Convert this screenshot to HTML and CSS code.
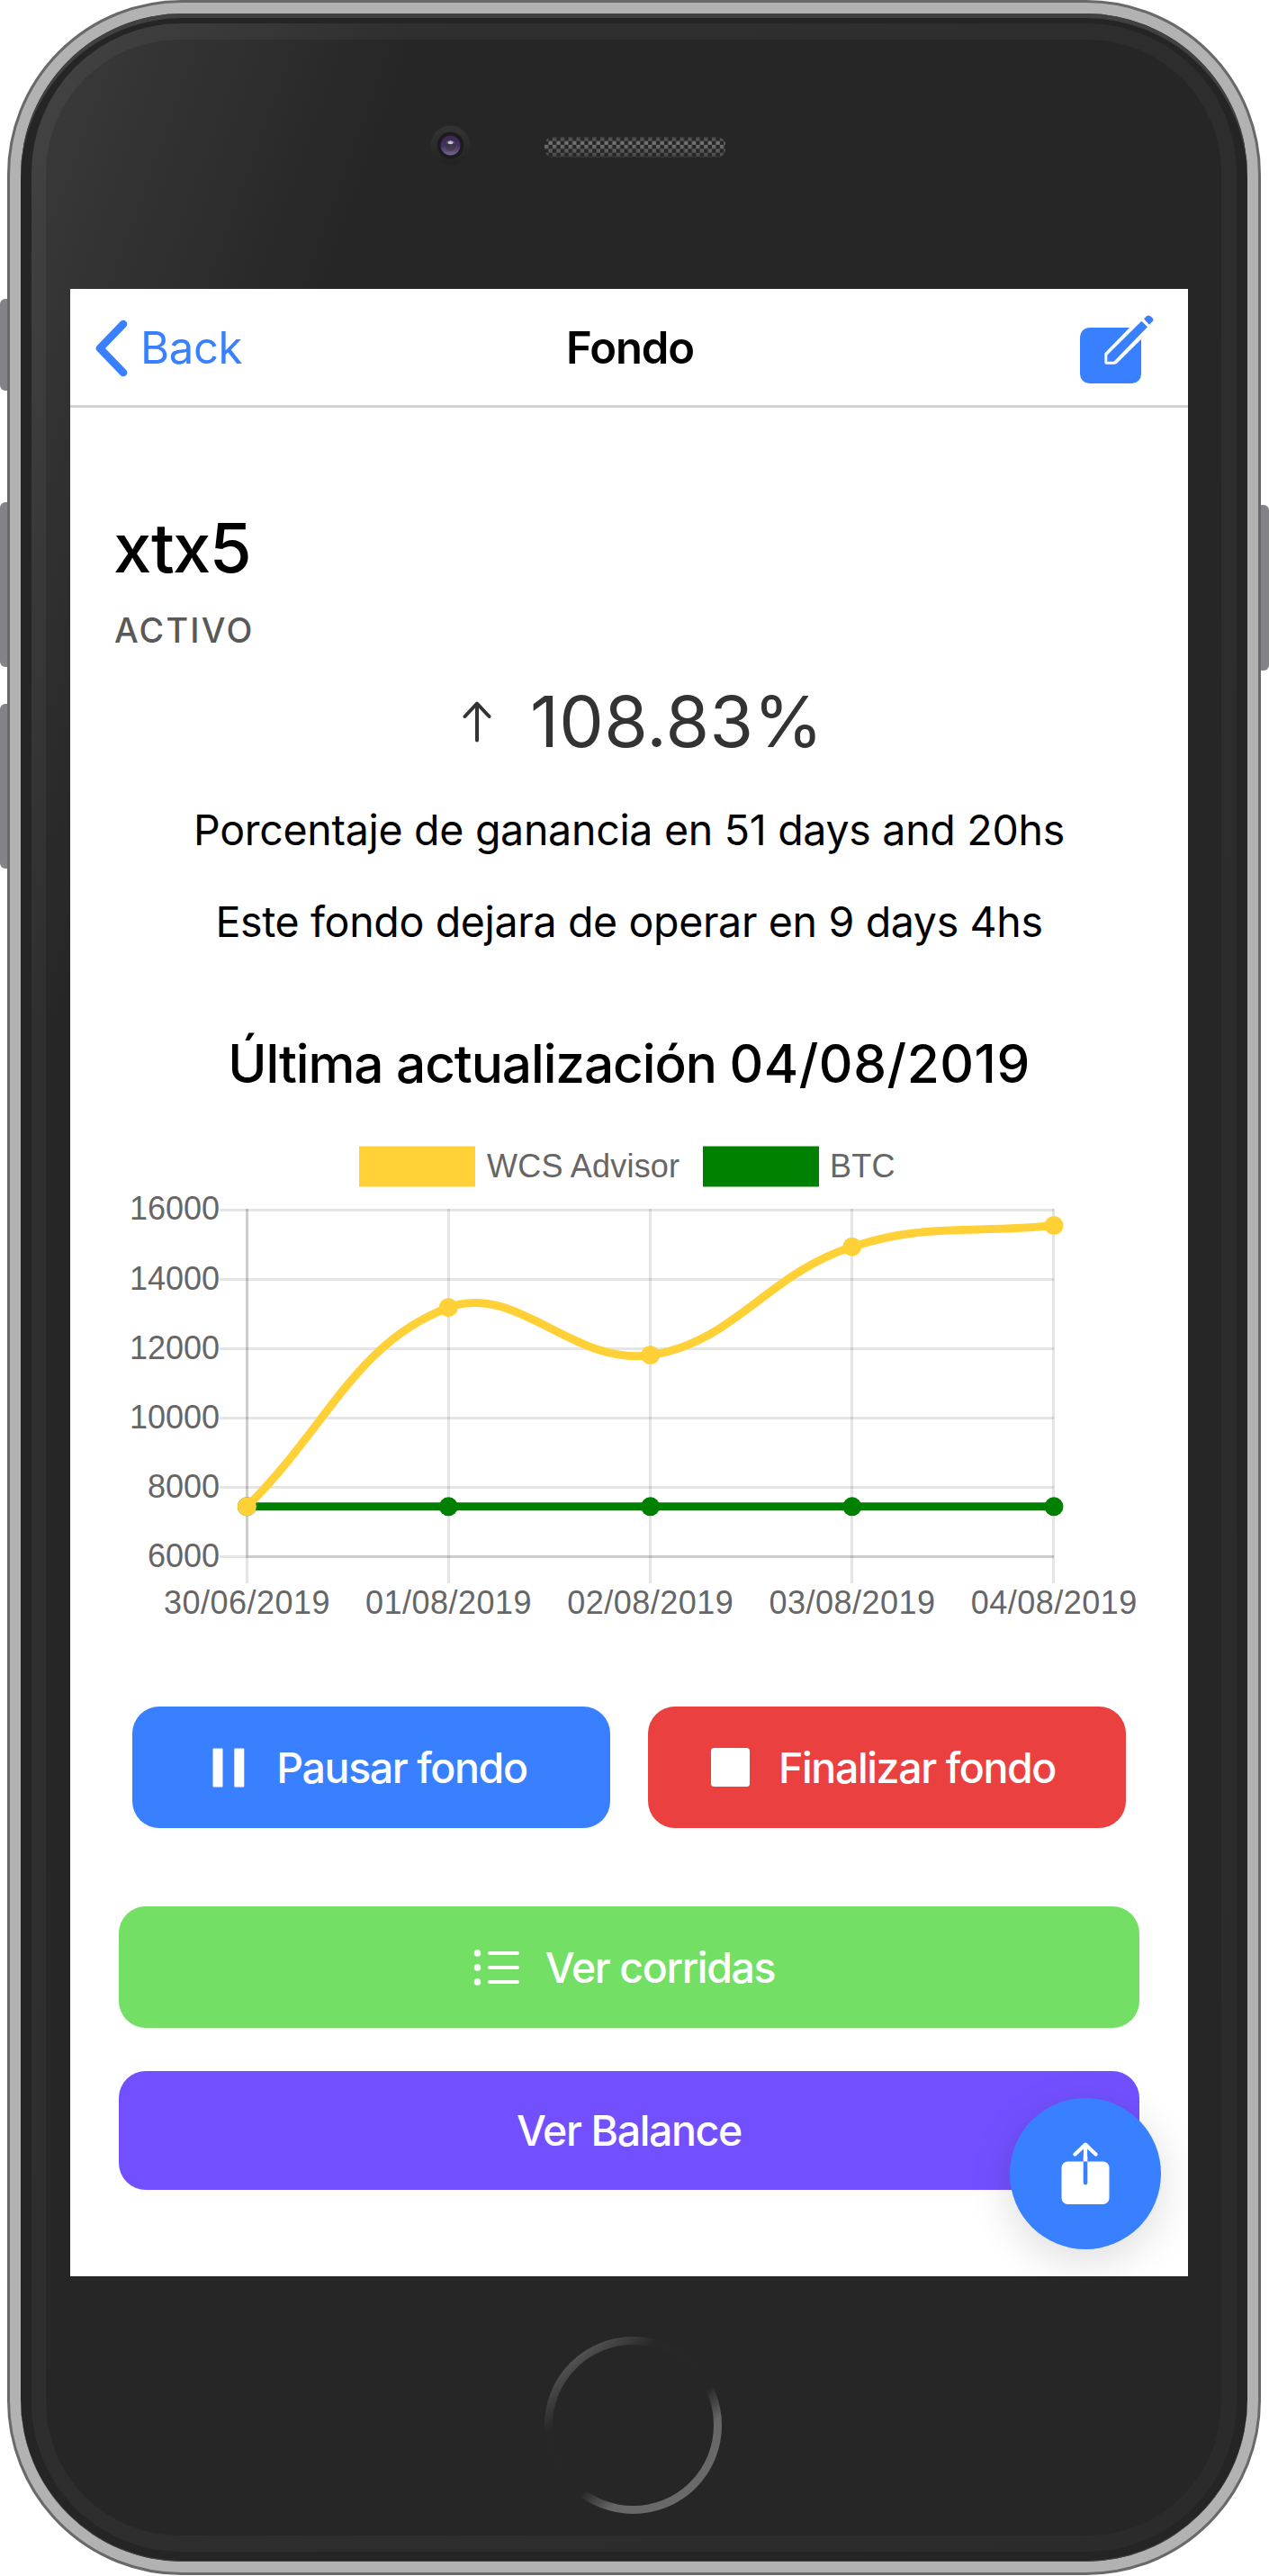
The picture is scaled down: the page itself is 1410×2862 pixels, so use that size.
FILE: index.html
```html
<!DOCTYPE html>
<html lang="es">
<head>
<meta charset="utf-8">
<title>Fondo</title>
<link rel="stylesheet" href="styles.css">
</head>
<body>
<div class="phone">
  <span class="key key-mute"></span>
  <span class="key key-up"></span>
  <span class="key key-down"></span>
  <span class="key key-power"></span>
  <div class="frame">
    <div class="bezel">
      <div class="rim">
        <div class="face">
          <div class="sensors">
            <svg class="camera" viewBox="0 0 46 46">
              <defs>
                <linearGradient id="cam-rim" x1="0" y1="0" x2="0" y2="1"><stop offset="0" stop-color="#343434"/><stop offset="1" stop-color="#222"/></linearGradient>
                <linearGradient id="cam-lens" x1="0" y1="0" x2="0" y2="1"><stop offset="0" stop-color="#3a2650"/><stop offset=".5" stop-color="#43305f"/><stop offset="1" stop-color="#75648c"/></linearGradient>
                <linearGradient id="cam-core" x1="0" y1="0" x2="0" y2="1"><stop offset="0" stop-color="#8d8795"/><stop offset=".35" stop-color="#3a3345"/><stop offset="1" stop-color="#4a4058"/></linearGradient>
              </defs>
              <circle cx="23" cy="23" r="22.5" fill="url(#cam-rim)"/>
              <circle cx="23" cy="23" r="15" fill="#1b1b1f"/>
              <circle cx="23" cy="23" r="11.2" fill="url(#cam-lens)"/>
              <circle cx="23" cy="23.5" r="6" fill="url(#cam-core)"/>
              <ellipse cx="23" cy="20" rx="3" ry="1.6" fill="#c9c6cc"/>
            </svg>
            <svg class="speaker" viewBox="0 0 202 23">
              <defs>
                <pattern id="mesh" width="8.9" height="8.9" patternUnits="userSpaceOnUse"><rect width="4.45" height="4.45" fill="#fff"/><rect x="4.45" y="4.45" width="4.45" height="4.45" fill="#fff"/></pattern>
                <linearGradient id="mesh-tone" x1="0" y1="0" x2="0" y2="1"><stop offset="0" stop-color="#3c3c3c"/><stop offset=".3" stop-color="#757575"/><stop offset="1" stop-color="#444"/></linearGradient>
                <mask id="mesh-mask"><rect width="202" height="23" rx="9" fill="url(#mesh)"/></mask>
              </defs>
              <rect width="202" height="23" fill="url(#mesh-tone)" mask="url(#mesh-mask)"/>
            </svg>
          </div>

          <main class="screen">
            <header class="toolbar">
              <a class="back">
                <svg class="chevron" viewBox="0 0 36 64"><path d="M31 5 5 32l26 27" fill="none" stroke="currentColor" stroke-width="8.6" stroke-linecap="round" stroke-linejoin="round"/></svg>
                <span>Back</span>
              </a>
              <h1 class="title">Fondo</h1>
              <svg class="edit" viewBox="0 0 84 78">
                <rect x="1" y="15" width="68" height="62" rx="10.5" fill="#3880ff"/>
                <path d="M57 14 28.300 43.500V53.500q0 2.200 2.200 2.200H39.500q1.600 0 2.700-1.100L72 25V14z" fill="#fff"/>
                <path d="M69.300 7.700 76 14.300 38.500 52.700H31.300V45.500z" fill="#3880ff"/>
                <path d="M72 5.300 74.600 2.700q2.600-2.600 6 .6t.8 5L77.900 11.700z" fill="#3880ff"/>
              </svg>
            </header>

            <section class="summary">
              <h2 class="name">xtx5</h2>
              <p class="status">ACTIVO</p>
              <div class="gain">
                <svg class="arrow" viewBox="0 0 32 46"><path d="M16 43.500V3M2.500 17 16 2.700 29.500 17" fill="none" stroke="currentColor" stroke-width="4" stroke-linecap="round" stroke-linejoin="round"/></svg>
                <span>108.83%</span>
              </div>
              <p class="line line-first">Porcentaje de ganancia en 51 days and 20hs</p>
              <p class="line line-second">Este fondo dejara de operar en 9 days 4hs</p>
            </section>

            <h2 class="updated">Última actualización <span class="date">04/08/2019</span></h2>

            <svg class="chart" viewBox="78 1260 1242 560">
              <rect x="399" y="1273.500" width="129" height="45" fill="#ffd137"/>
              <rect x="781" y="1273.500" width="129" height="45" fill="#008000"/>
              <g class="chart-text legend">
                <text x="541" y="1307.500">WCS Advisor</text>
                <text x="922" y="1307.500">BTC</text>
              </g>
              <g stroke="#000" stroke-opacity=".1" stroke-width="3">
                <path d="M244 1344.500H1171M244 1421.500H1171M244 1498.500H1171M244 1575.500H1171M244 1652.500H1171M244 1729.500H1171"/>
                <path d="M274.500 1343V1759M498.500 1343V1759M722.500 1343V1759M946.500 1343V1759M1170.500 1343V1759"/>
                <path d="M274.500 1343V1729.500M273 1729.500H1171"/>
              </g>
              <path d="M274.400 1673.800H1171" stroke="#008000" stroke-width="9"/>
              <g fill="#008000">
                <circle cx="274.400" cy="1673.800" r="10.500"/><circle cx="498.300" cy="1673.800" r="10.500"/><circle cx="722.600" cy="1673.800" r="10.500"/><circle cx="946.800" cy="1673.800" r="10.500"/><circle cx="1171" cy="1673.800" r="10.500"/>
              </g>
              <path d="M274.400 1673.800C364 1585.400 394.800 1491.500 498.300 1452.700C574.100 1424.300 637.300 1518.400 722.600 1505.600C816.700 1491.400 851.700 1415.700 946.800 1385.200C1031.100 1358.100 1081.300 1371 1171 1361.600" fill="none" stroke="#ffd137" stroke-width="9"/>
              <g fill="#ffd137">
                <circle cx="274.400" cy="1673.800" r="10.500"/><circle cx="498.300" cy="1452.700" r="10.500"/><circle cx="722.600" cy="1505.600" r="10.500"/><circle cx="946.800" cy="1385.200" r="10.500"/><circle cx="1171" cy="1361.600" r="10.500"/>
              </g>
              <g class="chart-text" text-anchor="end">
                <text x="244" y="1355">16000</text>
                <text x="244" y="1432.500">14000</text>
                <text x="244" y="1509.500">12000</text>
                <text x="244" y="1586.500">10000</text>
                <text x="244" y="1663.500">8000</text>
                <text x="244" y="1740.500">6000</text>
              </g>
              <g class="chart-text days" text-anchor="middle">
                <text x="274.500" y="1793">30/06/2019</text>
                <text x="498.500" y="1793">01/08/2019</text>
                <text x="722.800" y="1793">02/08/2019</text>
                <text x="947" y="1793">03/08/2019</text>
                <text x="1171.300" y="1793">04/08/2019</text>
              </g>
            </svg>

            <div class="actions">
              <button class="btn btn-pause">
                <svg class="ico-pause" viewBox="0 0 36 44"><rect x=".5" y=".5" width="11" height="43" rx="1" fill="#fff"/><rect x="24.300" y=".5" width="11" height="43" rx="1" fill="#fff"/></svg>
                <span>Pausar fondo</span>
              </button>
              <button class="btn btn-stop">
                <svg class="ico-stop" viewBox="0 0 43 43"><rect width="43" height="43" rx="3.500" fill="#fff"/></svg>
                <span>Finalizar fondo</span>
              </button>
            </div>

            <div class="links">
              <button class="btn btn-runs">
                <svg class="ico-list" viewBox="0 0 52 42">
                  <g fill="#fff"><circle cx="4.500" cy="5" r="3.800"/><circle cx="4.500" cy="21" r="3.800"/><circle cx="4.500" cy="37" r="3.800"/></g>
                  <path d="M18 5h31M18 21h31M18 37h31" stroke="#fff" stroke-width="4" stroke-linecap="round"/>
                </svg>
                <span>Ver corridas</span>
              </button>
              <button class="btn btn-balance"><span>Ver Balance</span></button>
            </div>

            <button class="fab">
              <svg class="ico-share" viewBox="0 0 54 70">
                <rect x=".5" y="21.500" width="53" height="47.500" rx="7" fill="#fff"/>
                <path d="M27 21.500V45" stroke="#3880ff" stroke-width="4.600" stroke-linecap="round"/>
                <path d="M24.700 16h4.600v5.500h-4.600z" fill="#fff"/>
                <path d="M27 18V3M15.500 13.500 27 2.600l11.500 10.900" fill="none" stroke="#fff" stroke-width="4.200" stroke-linecap="round" stroke-linejoin="round"/>
              </svg>
            </button>
          </main>

          <div class="chin">
            <svg class="home" viewBox="0 0 197 197">
              <defs>
                <linearGradient id="ring" gradientUnits="userSpaceOnUse" x1="35.500" y1="22.500" x2="161.500" y2="174.500">
                  <stop offset="0" stop-color="#525252"/><stop offset=".22" stop-color="#272727"/><stop offset=".61" stop-color="#262626"/><stop offset=".78" stop-color="#666"/><stop offset="1" stop-color="#6a6a6a"/>
                </linearGradient>
              </defs>
              <circle cx="98.500" cy="98.500" r="94" fill="none" stroke="url(#ring)" stroke-width="9"/>
            </svg>
          </div>
        </div>
      </div>
    </div>
  </div>
</div>
</body>
</html>
```
FILE: styles.css
```css
* { box-sizing: border-box; }

body {
  margin: 0;
  background: #fff;
  font-family: Inter, "Liberation Sans", sans-serif;
  color: #000;
}

h1, h2, p { margin: 0; }
svg { display: block; flex: none; }

/* device */
.phone {
  position: relative;
  width: 1410px;
  height: 2862px;
  padding: 0 9px 0 8px;
  overflow: hidden;
}

.key {
  position: absolute;
  width: 14px;
  background: #838287;
  border-radius: 6px;
}
.key-mute { left: 0; top: 332px; height: 102px; }
.key-up { left: 0; top: 558px; height: 183px; }
.key-down { left: 0; top: 782px; height: 183px; }
.key-power { right: 0; top: 561px; height: 184px; }

.frame {
  position: relative;
  height: 2861px;
  padding: 12px;
  border: 3px solid #686968;
  border-radius: 194px;
  background: #b2b2b2;
}

.bezel {
  height: 100%;
  padding: 11px 12px;
  border-radius: 180px;
  background: #252525;
  box-shadow: inset 0 5px 0 #404240, inset 0 -1px 0 #444;
}

.rim {
  height: 100%;
  padding: 18px 17px 18px 16px;
  border-radius: 166px;
  background: linear-gradient(110deg, #444 0, #2f2f2f 385px, #2b2b2b 100%);
}

.face {
  display: flex;
  flex-direction: column;
  height: 100%;
  padding: 0 37px 0 27px;
  border-radius: 148px;
  background: linear-gradient(110deg, #3a3a3a 0, #262626 385px);
}

.sensors {
  display: flex;
  align-items: center;
  gap: 82px;
  height: 277px;
  padding: 95px 0 137px 400px;
}
.camera { width: 45px; height: 45px; }
.speaker { width: 201px; height: 23px; margin-top: 4px; }

.chin { flex: 1; padding: 67px 0 0 527px; }
.home { width: 197px; height: 197px; }

/* app */
.screen {
  position: relative;
  display: flex;
  flex-direction: column;
  flex: none;
  height: 2208px;
  overflow: hidden;
  background: #fff;
}

.toolbar {
  display: grid;
  grid-template-columns: 1fr auto 1fr;
  align-items: center;
  flex: none;
  height: 132px;
  padding: 0 37px 0 28px;
  border-bottom: 3px solid #d2d2d2;
  font-size: 49px;
  line-height: 60px;
}
.back {
  display: flex;
  align-items: center;
  gap: 14px;
  padding-top: 3px;
  color: #3880ff;
  letter-spacing: -.35px;
}
.chevron { width: 36px; height: 64px; }
.title {
  padding: 3px 0 0 11px;
  font-size: 49px;
  font-weight: 600;
  letter-spacing: -1.100px;
}
.edit { width: 84px; height: 78px; justify-self: end; margin-top: 5px; }

.summary { flex: none; padding: 110px 0 0 48px; }
.name {
  font-size: 76px;
  font-weight: 500;
  line-height: 90px;
  letter-spacing: -1.750px;
}
.status {
  margin-top: 24px;
  padding-left: 1px;
  font-size: 37.700px;
  font-weight: 450;
  line-height: 46px;
  letter-spacing: 2.250px;
  color: #595959;
}
.gain {
  display: flex;
  align-items: center;
  gap: 43px;
  margin-top: 31px;
  padding-left: 388px;
  font-size: 78.600px;
  line-height: 96px;
  letter-spacing: .3px;
  color: #333;
}
.arrow { width: 32px; height: 46px; }
.line {
  margin-left: -48px;
  text-align: center;
  font-size: 46.500px;
  line-height: 56px;
  white-space: nowrap;
}
.line-first { margin-top: 44px; letter-spacing: -.29px; }
.line-second { margin-top: 46px; letter-spacing: -.345px; }

.updated {
  margin-top: 95px;
  text-align: center;
  font-size: 58.500px;
  font-weight: 500;
  line-height: 70px;
  letter-spacing: -1.070px;
  white-space: nowrap;
}
.date { letter-spacing: .55px; }

.chart { width: 1242px; height: 560px; margin-top: 43px; }
.chart-text {
  font-family: "Liberation Sans", Arial, sans-serif;
  font-size: 36px;
  fill: #666;
}
.legend { letter-spacing: .2px; }
.days { letter-spacing: .5px; }

.btn {
  display: flex;
  align-items: center;
  justify-content: center;
  height: 135px;
  border: 0;
  border-radius: 30px;
  color: #fff;
  font-family: inherit;
  font-size: 46.500px;
  font-weight: 500;
  letter-spacing: -1.400px;
  white-space: nowrap;
}
.actions {
  display: grid;
  grid-template-columns: 1fr 1fr;
  gap: 42px;
  margin-top: 76px;
  padding: 0 69px;
}
.btn-pause { gap: 35px; padding: 0 3px 0 0; background: #3880ff; }
.btn-stop { gap: 32px; padding: 0 8px 0 0; background: #eb4040; }
.ico-pause { width: 36px; height: 44px; }
.ico-stop { width: 43px; height: 43px; }

.links {
  display: flex;
  flex-direction: column;
  gap: 48px;
  margin-top: 87px;
  padding: 0 54px;
}
.btn-runs { gap: 28px; padding: 0 11px 0 0; background: #73df65; }
.btn-balance { height: 132px; padding: 0; background: #7350ff; }
.ico-list { width: 52px; height: 42px; }

.fab {
  position: absolute;
  right: 30px;
  bottom: 30px;
  display: flex;
  align-items: center;
  justify-content: center;
  width: 168px;
  height: 168px;
  padding: 0;
  border: 0;
  border-radius: 50%;
  background: #3880ff;
  box-shadow: 0 12px 48px rgba(0, 0, 0, .14);
}
.ico-share { width: 54px; height: 70px; }
```
